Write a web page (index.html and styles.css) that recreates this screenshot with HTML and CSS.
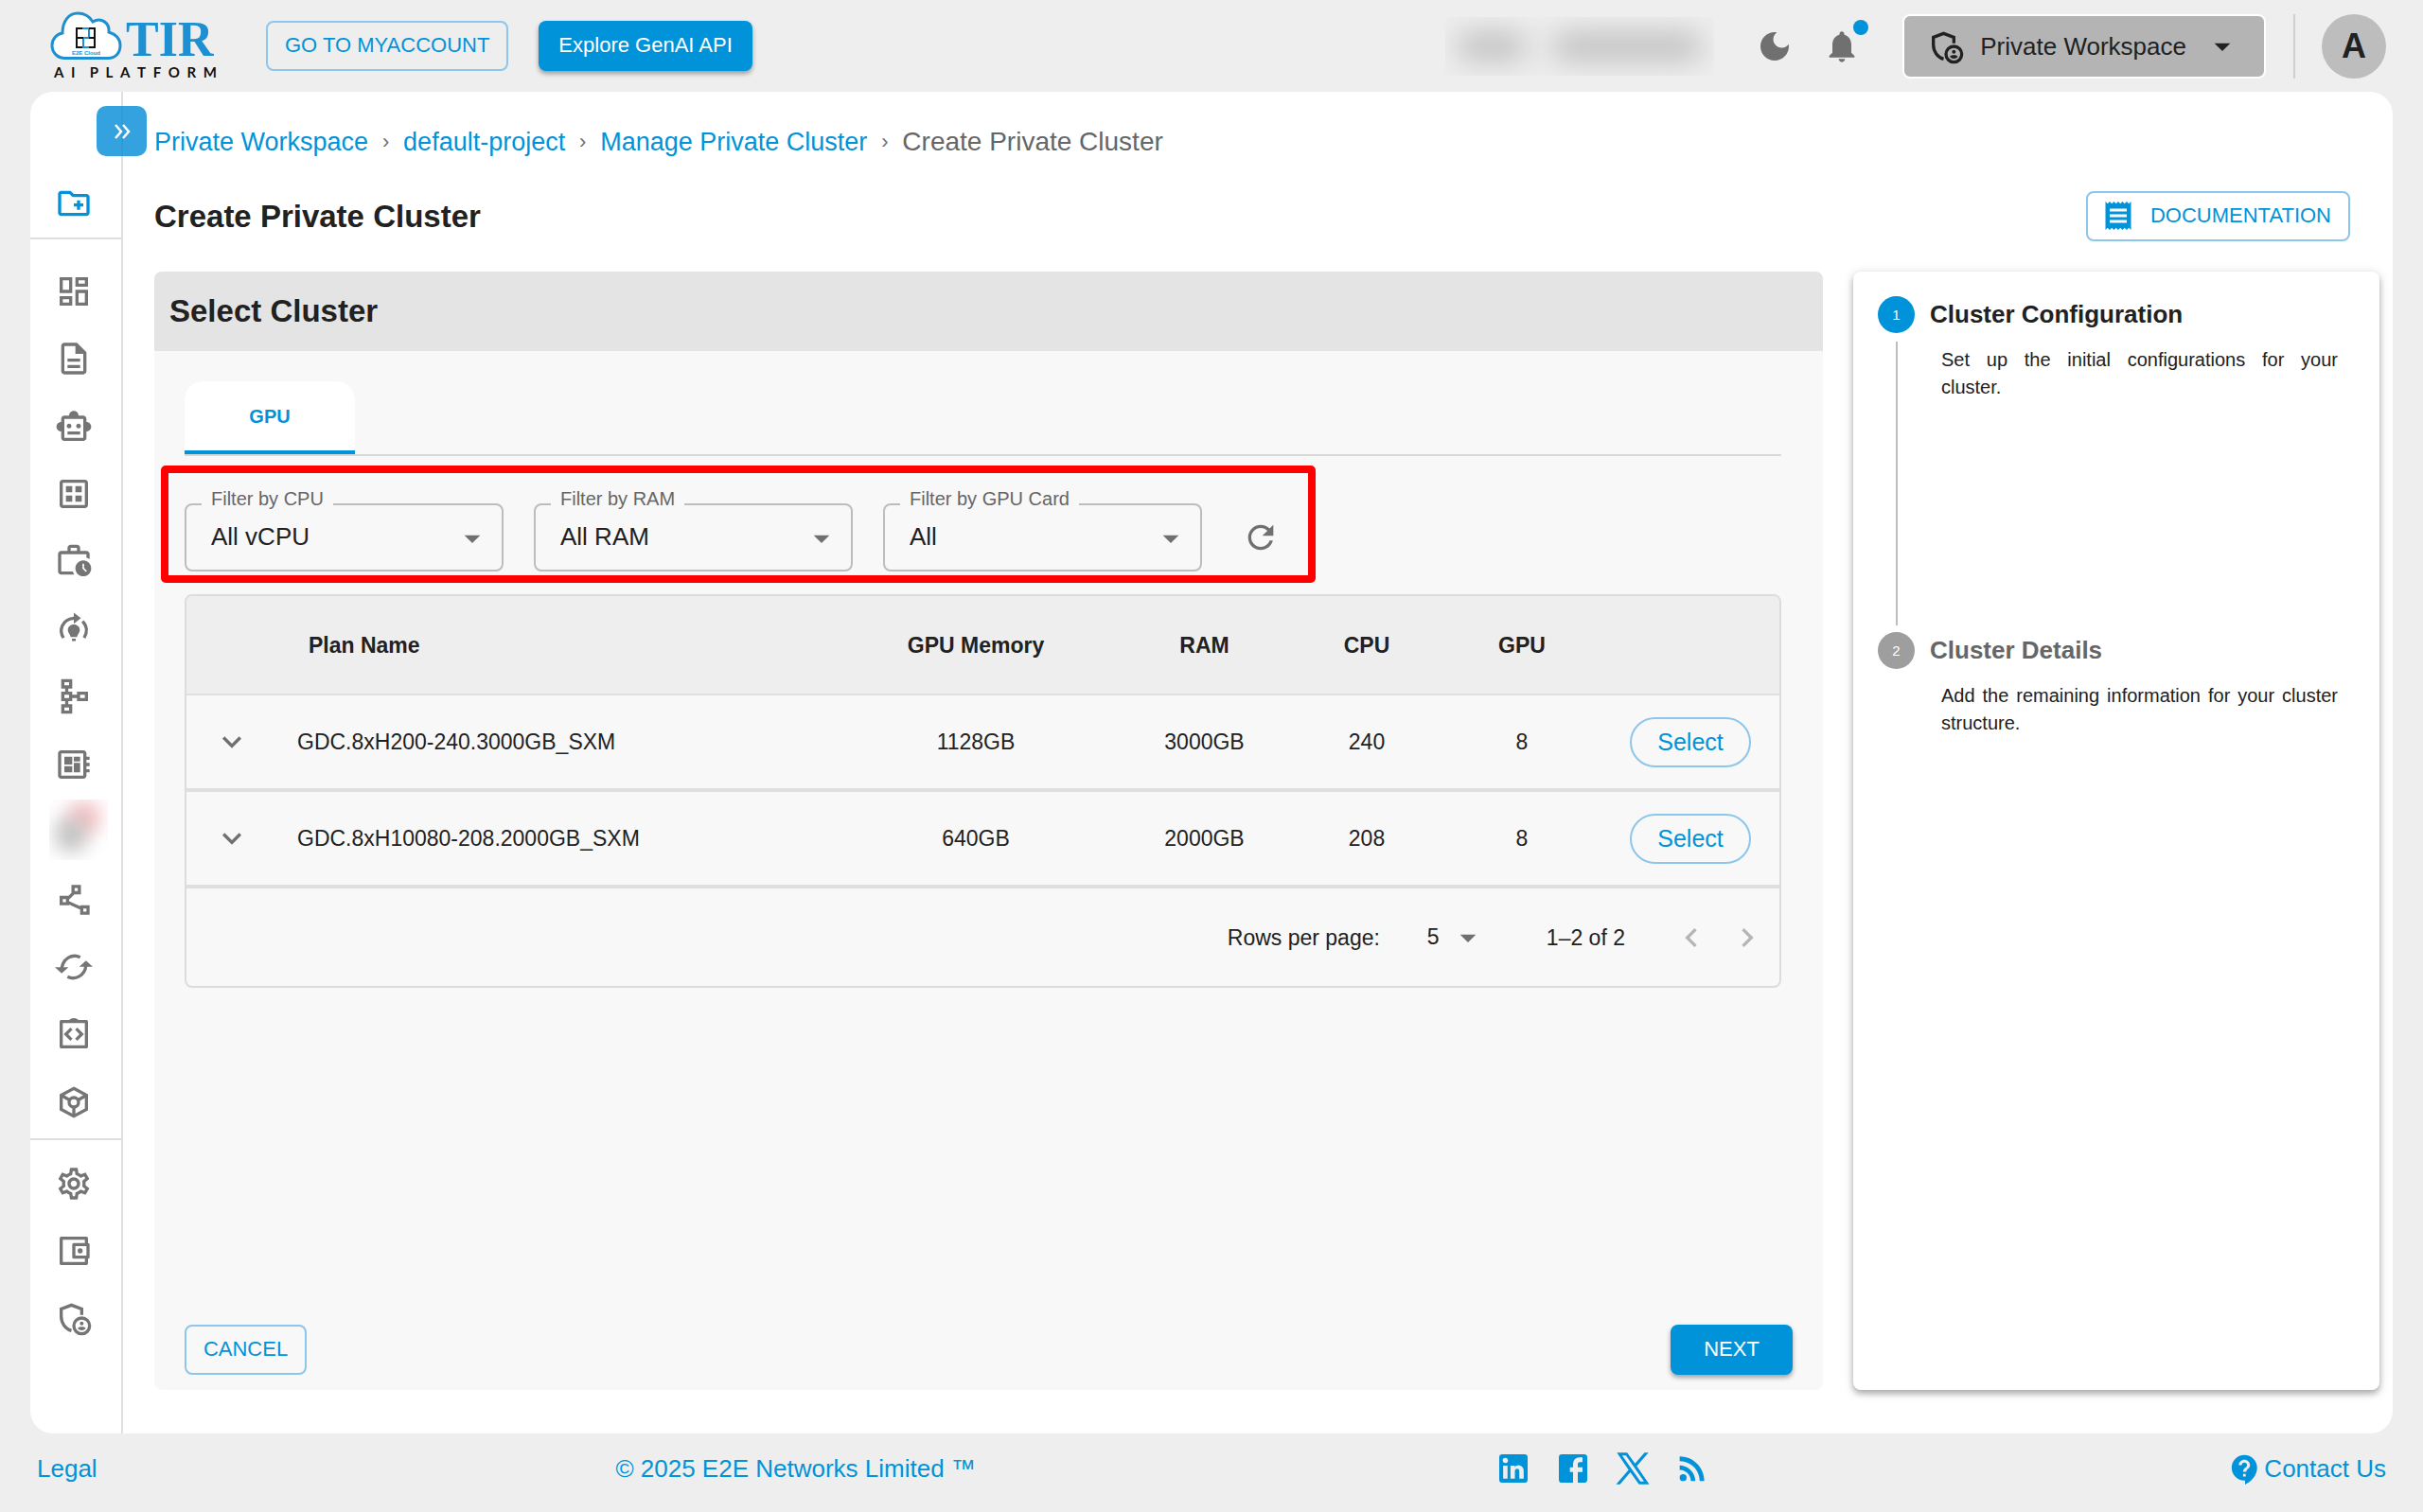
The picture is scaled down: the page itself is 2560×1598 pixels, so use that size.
FILE: index.html
```html
<!DOCTYPE html>
<html lang="en">
<head>
<meta charset="utf-8">
<title>TIR AI Platform - Create Private Cluster</title>
<link rel="stylesheet" href="styles.css">
</head>
<body>
<svg class="sprite" aria-hidden="true">
  <symbol id="shield-account" viewBox="0 0 24 24">
    <path fill="none" stroke="currentColor" stroke-width="2" d="M17 10V6.300L10.500 3.800 4 6.300V11c0 4.300 2.800 8 6.500 9"/>
    <circle cx="17" cy="17" r="5" fill="none" stroke="currentColor" stroke-width="2"/>
    <circle cx="17" cy="15.400" r="1.200" fill="currentColor"/>
    <path fill="currentColor" d="M14.500 18.600c0-1.500 5-1.500 5 0-.6.800-1.500 1.200-2.500 1.200s-1.900-.4-2.500-1.200z"/>
  </symbol>
  <symbol id="arrow-down" viewBox="0 0 24 24"><path fill="currentColor" d="M7 10l5 5 5-5z"/></symbol>
  <symbol id="chevron-down" viewBox="0 0 24 24"><path fill="currentColor" d="M7.410 8.590 12 13.170l4.590-4.580L18 10l-6 6-6-6z"/></symbol>
</svg>

<header class="topbar">
  <a class="logo" href="#" aria-label="TIR AI Platform">
    <svg class="logo-cloud" viewBox="0 0 76 52" aria-hidden="true">
      <path fill="#fff" stroke="#1e8fd0" stroke-width="3" d="M16 49.500C7 49.500 2 43 2 36c0-7 5-12 11-13C13 10 20 2 29 2c8 0 13 4 16 9 9-5 18 1 17 11 7 2 12 7 12 14 0 8-5 13.500-13 13.500z"/>
      <path fill="none" stroke="#1e8fd0" stroke-width="2" d="M34 18h7v10h-6v10h6"/>
      <path fill="none" stroke="#111" stroke-width="2" d="M34 18h-6v20h6M28 28h7M41 18h6v20h-6M41 28h6"/>
      <text x="38" y="46" text-anchor="middle" class="logo-small">E2E Cloud</text>
    </svg>
    <span class="logo-name">TIR</span>
    <span class="logo-sub"><span>A</span><span>I</span><span></span><span>P</span><span>L</span><span>A</span><span>T</span><span>F</span><span>O</span><span>R</span><span>M</span></span>
  </a>
  <button class="btn btn-outline btn-account" type="button">GO TO MYACCOUNT</button>
  <button class="btn btn-solid" type="button">Explore GenAI API</button>
  <div class="topbar-right">
    <div class="usage-mask"><i class="mask-short"></i><i class="mask-long"></i></div>
    <button class="icon-btn" type="button" aria-label="Dark mode"><svg class="icon" viewBox="0 0 24 24"><path fill="currentColor" d="M12 3c-4.970 0-9 4.030-9 9s4.030 9 9 9 9-4.030 9-9c0-.46-.04-.92-.1-1.360-.98 1.370-2.580 2.260-4.400 2.260-2.980 0-5.400-2.420-5.400-5.400 0-1.810.89-3.420 2.260-4.400-.44-.06-.9-.1-1.360-.1z"/></svg></button>
    <button class="icon-btn bell" type="button" aria-label="Notifications"><svg class="icon" viewBox="0 0 24 24"><path fill="currentColor" d="M12 22c1.100 0 2-.9 2-2h-4c0 1.100.89 2 2 2zm6-6v-5c0-3.070-1.640-5.640-4.500-6.320V4c0-.83-.67-1.500-1.500-1.500s-1.500.67-1.500 1.500v.68C7.630 5.360 6 7.920 6 11v5l-2 2v1h16v-1l-2-2z"/></svg></button>
    <button class="workspace" type="button"><svg class="icon"><use href="#shield-account"/></svg><span>Private Workspace</span><svg class="icon"><use href="#arrow-down"/></svg></button>
    <span class="avatar-wrap"><button class="avatar" type="button">A</button></span>
  </div>
</header>

<div class="shell">
  <nav class="sidebar" aria-label="Main">
    <button class="collapse" type="button" aria-label="Expand menu"><svg viewBox="0 0 24 24"><path fill="none" stroke="currentColor" stroke-width="2.500" d="M5 5l6 7-6 7M13 5l6 7-6 7"/></svg></button>
    <div class="nav-new"><a href="#" aria-label="New project"><svg class="icon" viewBox="0 0 24 24"><path fill="currentColor" d="M20 6h-8l-2-2H4c-1.110 0-1.990.89-1.990 2L2 18c0 1.110.89 2 2 2h16c1.110 0 2-.89 2-2V8c0-1.110-.89-2-2-2zm0 12H4V6h5.170l2 2H20v10zm-8-4h2v2h2v-2h2v-2h-2v-2h-2v2h-2z"/></svg></a></div>
    <div class="nav-main">
      <a href="#" aria-label="Dashboard"><svg class="icon" viewBox="0 0 24 24"><path fill="currentColor" d="M19 5v2h-4V5h4M9 5v6H5V5h4m10 8v6h-4v-6h4M9 17v2H5v-2h4M21 3h-8v6h8V3zM11 3H3v10h8V3zm10 8h-8v10h8V11zm-10 4H3v6h8v-6z"/></svg></a>
      <a href="#" aria-label="Notebooks"><svg class="icon" viewBox="0 0 24 24"><path fill="currentColor" d="M8 16h8v2H8zm0-4h8v2H8zm6-10H6c-1.100 0-2 .9-2 2v16c0 1.100.89 2 1.990 2H18c1.100 0 2-.9 2-2V8l-6-6zm4 18H6V4h7v5h5v11z"/></svg></a>
      <a href="#" aria-label="Agents"><svg class="icon" viewBox="0 0 24 24"><path fill="currentColor" d="M20 9V7c0-1.100-.9-2-2-2h-3c0-1.660-1.340-3-3-3S9 3.340 9 5H6c-1.100 0-2 .9-2 2v2c-1.660 0-3 1.340-3 3s1.340 3 3 3v4c0 1.100.9 2 2 2h12c1.100 0 2-.9 2-2v-4c1.660 0 3-1.340 3-3s-1.340-3-3-3zm-2 10H6V7h12v12zm-9-6c-.83 0-1.500-.67-1.500-1.500S8.170 10 9 10s1.500.67 1.500 1.500S9.830 13 9 13zm7.500-1.500c0 .83-.67 1.500-1.500 1.500s-1.500-.67-1.500-1.500.67-1.500 1.500-1.500 1.500.67 1.500 1.500zM8 15h8v2H8v-2z"/></svg></a>
      <a href="#" aria-label="Datasets"><svg class="icon" viewBox="0 0 24 24"><path fill="currentColor" d="M19 3H5c-1.100 0-2 .9-2 2v14c0 1.100.9 2 2 2h14c1.100 0 2-.9 2-2V5c0-1.100-.9-2-2-2zm0 16H5V5h14v14zM7 7h4v4H7zm6 0h4v4h-4zm-6 6h4v4H7zm6 0h4v4h-4z"/></svg></a>
      <a href="#" aria-label="Jobs"><svg class="icon" viewBox="0 0 24 24"><path fill="currentColor" d="M18 11c-2.760 0-5 2.240-5 5s2.240 5 5 5 5-2.240 5-5-2.240-5-5-5zm1.650 7.350L17.500 16.200V13h1v2.790l1.850 1.850-.7.710zM4 18V7h16v2.300c.7.200 1.400.5 2 .9V7c0-1.100-.9-2-2-2h-4V3c0-1.100-.9-2-2-2h-4c-1.100 0-2 .9-2 2v2H4C2.900 5 2 5.900 2 7v11c0 1.100.9 2 2 2h8.300c-.4-.6-.7-1.300-.9-2H4zM10 3h4v2h-4V3z"/></svg></a>
      <a href="#" aria-label="Fine tuning"><svg class="icon" viewBox="0 0 24 24"><path fill="none" stroke="currentColor" stroke-width="2" d="M5.500 17.500C2.500 13 4 6 12 5h2M17.500 7c3 3 3.200 7 1 10.500"/><path fill="currentColor" d="M12 1.500 16.500 5 12 8.500zM12 9c2.200 0 3.800 1.600 3.800 3.500 0 1.700-1.300 2.500-1.800 4.500h-4c-.5-2-1.800-2.800-1.800-4.500C8.200 10.600 9.800 9 12 9zM10.800 18h2.400v1.500h-2.400z"/></svg></a>
      <a href="#" aria-label="Pipelines"><svg class="icon" viewBox="0 0 24 24"><path fill="currentColor" d="M14 9v2h-3V9H8.500V7H11V1H4v6h2.500v2H4v6h2.500v2H4v6h7v-6H8.500v-2H11v-2h3v2h7V9h-7zM6 3h3v2H6V3zm3 18H6v-2h3v2zm0-8H6v-2h3v2zm10 0h-3v-2h3v2z"/></svg></a>
      <a href="#" aria-label="Clusters"><svg class="icon" viewBox="0 0 24 24"><path fill="currentColor" d="M22 9V7h-2V5c0-1.100-.9-2-2-2H4c-1.100 0-2 .9-2 2v14c0 1.100.9 2 2 2h14c1.100 0 2-.9 2-2v-2h2v-2h-2v-2h2v-2h-2V9h2zm-4 10H4V5h14v14zM6 13h5v4H6zm6-6h4v3h-4zM6 7h5v5H6zm6 4h4v6h-4z"/></svg></a>
      <span class="nav-mask"><i class="mask-red"></i><i class="mask-gray"></i></span>
      <a href="#" aria-label="Endpoints"><svg class="icon" viewBox="0 0 24 24"><g fill="none" stroke="currentColor" stroke-width="2"><path d="M11.500 3.500h4v4h-4zM4 10.500h4v4H4zM17 16.500h4v4h-4zM12 7.500l-4 4M8 13.500l9 4"/></g></svg></a>
      <a href="#" aria-label="Sync"><svg class="icon" viewBox="0 0 24 24"><path fill="none" stroke="currentColor" stroke-width="2" d="M16 5.800C11 3.500 5 6.500 4.300 13M8 18.200c5 2.300 11-.7 11.700-7.200"/><path fill="currentColor" d="M0 12.200h8.600L4.300 16zM24 11.800h-8.600L19.700 8z"/></svg></a>
      <a href="#" aria-label="Source"><svg class="icon" viewBox="0 0 24 24"><path fill="none" stroke="currentColor" stroke-width="2" stroke-linejoin="round" d="M4 4h16v16H4z"/><path fill="none" stroke="currentColor" stroke-width="2" d="M10.500 8.500 7 12l3.500 3.500M13.500 8.500 17 12l-3.500 3.500"/><path fill="currentColor" d="M9 3.500C9.500 1.300 14.500 1.300 15 3.500z"/></svg></a>
      <a href="#" aria-label="Models"><svg class="icon" viewBox="0 0 24 24"><g fill="none" stroke="currentColor" stroke-width="2"><path d="M12 3.200 20 7.500v9L12 20.800 4 16.500v-9zM4 7.500l5.200 3M20 7.500l-5.200 3M12 15v5.800"/><circle cx="12" cy="12" r="3"/></g></svg></a>
    </div>
    <div class="nav-foot">
      <a href="#" aria-label="Settings"><svg class="icon" viewBox="0 0 24 24"><path fill="currentColor" d="M19.430 12.980c.04-.32.070-.64.070-.98s-.03-.66-.07-.98l2.110-1.650c.19-.15.24-.42.12-.64l-2-3.460c-.09-.16-.26-.25-.44-.25-.06 0-.12.010-.17.030l-2.490 1c-.52-.4-1.080-.73-1.690-.98l-.38-2.650C14.460 2.180 14.250 2 14 2h-4c-.25 0-.46.18-.49.42l-.38 2.650c-.61.25-1.170.59-1.690.98l-2.490-1c-.06-.02-.12-.03-.18-.03-.17 0-.34.090-.43.250l-2 3.460c-.13.220-.07.490.120.640l2.110 1.650c-.04.320-.07.650-.07.980s.03.660.070.980l-2.110 1.650c-.19.150-.24.420-.12.640l2 3.460c.09.160.26.250.44.250.06 0 .12-.01.170-.03l2.490-1c.52.400 1.080.730 1.690.980l.38 2.650c.03.240.24.420.49.420h4c.25 0 .46-.18.490-.42l.38-2.650c.61-.25 1.170-.59 1.690-.98l2.490 1c.06.020.12.030.18.030.17 0 .34-.09.430-.25l2-3.460c.12-.22.070-.49-.12-.64l-2.110-1.650zm-1.980-1.710c.04.310.05.520.05.730s-.02.430-.05.730l-.14 1.130.89.700 1.080.84-.7 1.210-1.270-.51-1.040-.42-.9.680c-.43.320-.84.560-1.250.73l-1.060.43-.16 1.130-.2 1.350h-1.400l-.35-2.480-1.060-.43c-.43-.18-.83-.41-1.230-.71l-.91-.7-1.060.43-1.270.51-.7-1.210 1.080-.84.890-.7-.14-1.130c-.03-.31-.05-.54-.05-.74s.02-.43.050-.73l.14-1.130-.89-.7-1.080-.84.700-1.210 1.270.51 1.040.42.900-.68c.43-.32.840-.56 1.250-.73l1.060-.43.160-1.130.2-1.350h1.390l.35 2.480 1.060.43c.43.180.83.410 1.230.71l.91.700 1.060-.43 1.270-.51.700 1.210-1.070.85-.89.700.14 1.130zM12 8c-2.210 0-4 1.790-4 4s1.790 4 4 4 4-1.790 4-4-1.790-4-4-4zm0 6c-1.100 0-2-.9-2-2s.9-2 2-2 2 .9 2 2-.9 2-2 2z"/></svg></a>
      <a href="#" aria-label="Billing"><svg class="icon" viewBox="0 0 24 24"><path fill="none" stroke="currentColor" stroke-width="2" stroke-linejoin="round" d="M20 8V4H4v16h16v-4M12 8h9v8h-9z"/><circle cx="16" cy="12" r="1.600" fill="currentColor"/></svg></a>
      <a href="#" aria-label="Access"><svg class="icon"><use href="#shield-account"/></svg></a>
    </div>
  </nav>

  <main class="content">
    <nav class="crumbs" aria-label="Breadcrumb">
      <a href="#">Private Workspace</a><span class="sep">›</span><a href="#">default-project</a><span class="sep">›</span><a href="#">Manage Private Cluster</a><span class="sep">›</span><span class="current">Create Private Cluster</span>
    </nav>
    <div class="title-row">
      <h1>Create Private Cluster</h1>
      <button class="btn btn-outline btn-docs" type="button"><svg viewBox="0 0 24 24"><path fill="currentColor" d="M18 17H6v-2h12v2zm0-4H6v-2h12v2zm0-4H6V7h12v2zM3 22l1.500-1.500L6 22l1.500-1.500L9 22l1.500-1.500L12 22l1.500-1.500L15 22l1.500-1.500L18 22l1.500-1.500L21 22V2l-1.500 1.500L18 2l-1.500 1.500L15 2l-1.500 1.500L12 2l-1.500 1.500L9 2 7.500 3.500 6 2 4.500 3.500 3 2v20z"/></svg>DOCUMENTATION</button>
    </div>
    <div class="columns">
      <section class="panel">
        <h2>Select Cluster</h2>
        <div class="panel-body">
          <div class="tabs" role="tablist"><button class="tab" type="button" role="tab" aria-selected="true">GPU</button></div>
          <div class="filters">
            <div class="field"><label for="f-cpu">Filter by CPU</label><select id="f-cpu"><option>All vCPU</option></select><svg class="icon"><use href="#arrow-down"/></svg></div>
            <div class="field"><label for="f-ram">Filter by RAM</label><select id="f-ram"><option>All RAM</option></select><svg class="icon"><use href="#arrow-down"/></svg></div>
            <div class="field"><label for="f-gpu">Filter by GPU Card</label><select id="f-gpu"><option>All</option></select><svg class="icon"><use href="#arrow-down"/></svg></div>
            <button class="icon-btn refresh" type="button" aria-label="Reset filters"><svg class="icon" viewBox="0 0 24 24"><path fill="currentColor" d="M17.650 6.350C16.200 4.900 14.210 4 12 4c-4.420 0-7.990 3.580-7.990 8s3.570 8 7.990 8c3.730 0 6.840-2.550 7.730-6h-2.080c-.82 2.330-3.040 4-5.650 4-3.310 0-6-2.690-6-6s2.690-6 6-6c1.660 0 3.140.69 4.220 1.780L13 11h7V4l-2.350 2.350z"/></svg></button>
            <span class="highlight"></span>
          </div>
          <div class="table-box">
            <table>
              <colgroup><col class="c-toggle"><col><col class="c-mem"><col class="c-ram"><col class="c-cpu"><col class="c-gpu"><col class="c-act"></colgroup>
              <thead><tr><th></th><th class="name">Plan Name</th><th>GPU Memory</th><th>RAM</th><th>CPU</th><th>GPU</th><th></th></tr></thead>
              <tbody>
                <tr><td><button class="icon-btn" type="button" aria-label="Expand plan"><svg class="icon"><use href="#chevron-down"/></svg></button></td><td class="name">GDC.8xH200-240.3000GB_SXM</td><td>1128GB</td><td>3000GB</td><td>240</td><td>8</td><td class="act"><button class="btn btn-outline btn-pill" type="button">Select</button></td></tr>
                <tr><td><button class="icon-btn" type="button" aria-label="Expand plan"><svg class="icon"><use href="#chevron-down"/></svg></button></td><td class="name">GDC.8xH10080-208.2000GB_SXM</td><td>640GB</td><td>2000GB</td><td>208</td><td>8</td><td class="act"><button class="btn btn-outline btn-pill" type="button">Select</button></td></tr>
              </tbody>
            </table>
            <div class="pager">
              <label for="rows">Rows per page:</label>
              <span class="rows"><select id="rows"><option>5</option></select><svg class="icon"><use href="#arrow-down"/></svg></span>
              <span class="range">1–2 of 2</span>
              <button class="icon-btn" type="button" disabled aria-label="Previous page"><svg class="icon" viewBox="0 0 24 24"><path fill="currentColor" d="M15.410 7.410 14 6l-6 6 6 6 1.410-1.410L10.830 12z"/></svg></button>
              <button class="icon-btn" type="button" disabled aria-label="Next page"><svg class="icon" viewBox="0 0 24 24"><path fill="currentColor" d="M10 6 8.590 7.410 13.170 12l-4.580 4.590L10 18l6-6z"/></svg></button>
            </div>
          </div>
          <div class="actions">
            <button class="btn btn-outline btn-wide" type="button">CANCEL</button>
            <button class="btn btn-solid btn-wide" type="button">NEXT</button>
          </div>
        </div>
      </section>
      <aside class="steps">
        <ol>
          <li class="step active"><div class="rail"><span class="dot">1</span><span class="line"></span></div><div class="step-text"><h3>Cluster Configuration</h3><p><span class="full-line">Set up the initial configurations for your</span> cluster.</p></div></li>
          <li class="step"><div class="rail"><span class="dot">2</span></div><div class="step-text"><h3>Cluster Details</h3><p><span class="full-line">Add the remaining information for your cluster</span> structure.</p></div></li>
        </ol>
      </aside>
    </div>
  </main>
</div>

<footer class="footer">
  <a href="#">Legal</a>
  <a href="#">© 2025 E2E Networks Limited ™</a>
  <div class="social">
    <a href="#" aria-label="LinkedIn"><svg class="icon" viewBox="0 0 24 24"><path fill="currentColor" d="M19 3a2 2 0 0 1 2 2v14a2 2 0 0 1-2 2H5a2 2 0 0 1-2-2V5a2 2 0 0 1 2-2h14m-.5 15.500v-5.300a3.260 3.260 0 0 0-3.260-3.260c-.85 0-1.840.52-2.320 1.300v-1.110h-2.790v8.370h2.790v-4.930c0-.77.62-1.400 1.390-1.400a1.400 1.400 0 0 1 1.400 1.400v4.930h2.790M6.880 8.560a1.680 1.680 0 0 0 1.680-1.680c0-.93-.75-1.690-1.680-1.690a1.690 1.690 0 0 0-1.690 1.690c0 .93.760 1.680 1.690 1.680m1.390 9.940v-8.370H5.500v8.370h2.770z"/></svg></a>
    <a href="#" aria-label="Facebook"><svg class="icon" viewBox="0 0 24 24"><path fill="currentColor" d="M19 3H5a2 2 0 0 0-2 2v14a2 2 0 0 0 2 2h7v-6.800h-2v-3h2V9.500C12 6.800 13.500 5 16.200 5H18v3h-1.600c-.9 0-1.400.5-1.400 1.400v1.800h3v3h-3V21h4a2 2 0 0 0 2-2V5a2 2 0 0 0-2-2z"/></svg></a>
    <a href="#" aria-label="X"><svg class="icon" viewBox="0 0 24 24"><path fill="currentColor" d="M2 2h6.500l5 6.900L19.500 2H22l-7.400 8.500L22.500 22H16l-5.500-7.600L4 22H1.500l7.900-9.100zm3.300 1.700 11.600 16.600h2.300L7.700 3.700z"/></svg></a>
    <a href="#" aria-label="RSS"><svg class="icon" viewBox="0 0 24 24"><circle cx="6.200" cy="17.800" r="2.200" fill="currentColor"/><path fill="currentColor" d="M4 4.400v2.900c7 0 12.700 5.700 12.700 12.700h2.900C19.600 11.400 12.600 4.400 4 4.400zm0 5.700v2.800c3.900 0 7.100 3.200 7.100 7.100h2.800c0-5.500-4.400-9.900-9.900-9.900z"/></svg></a>
  </div>
  <a class="contact" href="#"><svg viewBox="0 0 24 24"><path fill="currentColor" d="M11.500 2C6.260 2 2 6.260 2 11.500S6.260 21 11.500 21h.5v3c4.860-2.340 9-7 9-12.500C21 6.260 16.740 2 11.500 2zm1 16h-2v-2h2v2zm.4-3.500h-2.400c0-3.250 3-3 3-5 0-1.100-.9-2-2-2s-2 .9-2 2h-2.200c0-2.210 1.990-4 4.200-4s4.200 1.790 4.200 4c0 2.500-2.800 2.750-2.800 5z"/></svg>Contact Us</a>
</footer>
</body>
</html>
```

FILE: styles.css
```css
:root {
  --blue: #0093d9;
  --blue-line: #8cc6ea;
  --text: #212121;
  --muted: #707070;
  --line: #dcdcdc;
  --page: #eeeeee;
  --soft: #f8f8f8;
}

* { box-sizing: border-box; }

body {
  margin: 0;
  min-height: 100vh;
  display: flex;
  flex-direction: column;
  background: var(--page);
  color: var(--text);
  font: 26px/32px "Liberation Sans", Arial, Helvetica, sans-serif;
}

a { color: var(--blue); text-decoration: none; }
h1, h2, h3, p, ol { margin: 0; padding: 0; }
button, select { font: inherit; color: inherit; }
button { border: 0; background: none; padding: 0; cursor: pointer; }
svg { display: block; flex: none; }
.sprite { display: none; }
.icon { width: 40px; height: 40px; }
.icon-btn { color: var(--muted); }

/* Buttons */
.btn {
  display: inline-flex;
  align-items: center;
  justify-content: center;
  height: 53px;
  padding: 0 21px 1px;
  border-radius: 8px;
  font-size: 22px;
  white-space: nowrap;
}
.btn-outline { border: 2px solid var(--blue-line); color: var(--blue); }
.btn-solid { background: var(--blue); color: #fff; box-shadow: 0 3px 5px rgba(0, 0, 0, .35); }
.btn-account { padding: 0 18px 1px; }
.btn-pill { width: 128px; border-radius: 27px; font-size: 25px; }
.btn-wide { min-width: 129px; padding: 0 16px 1px; }
.btn-docs { gap: 16px; padding: 0 18px 1px 14px; }
.btn-docs svg { width: 36px; height: 36px; }

/* Top bar */
.topbar {
  display: flex;
  align-items: center;
  height: 97px;
  padding: 0 39px 0 53px;
  gap: 32px;
}
.logo {
  display: grid;
  grid-template-columns: 76px auto;
  row-gap: 3px;
  width: 176px;
  margin-right: 20px;
}
.logo-cloud { width: 76px; height: 52px; }
.logo-small { font: bold 6px "Liberation Sans", sans-serif; fill: #1e8fd0; }
.logo-name { align-self: end; padding-left: 4px; font: bold 52px/44px "Liberation Serif", serif; color: #1e8fd0; }
.logo-sub {
  grid-column: 1 / -1;
  display: flex;
  justify-content: space-between;
  padding: 0 0 0 4px;
  font: bold 15px/18px Lato, sans-serif;
  color: #111;
}
.topbar-right { display: flex; align-items: center; margin-left: auto; }
.usage-mask {
  display: flex;
  align-items: center;
  gap: 26px;
  width: 284px;
  height: 62px;
  padding: 0 12px;
  margin-right: 44px;
  overflow: hidden;
}
.usage-mask i { height: 30px; border-radius: 15px; background: #c0c0c0; filter: blur(15px); }
.mask-short { width: 74px; }
.mask-long { flex: 1; }
.bell { position: relative; margin: 0 44px 0 31px; }
.bell::after {
  content: "";
  position: absolute;
  top: -8px;
  right: -8px;
  width: 16px;
  height: 16px;
  border-radius: 50%;
  background: var(--blue);
}
.workspace {
  display: flex;
  align-items: center;
  height: 68px;
  padding: 0 24px;
  border: 2px solid #fff;
  border-radius: 8px;
  background: #b4b4b4;
}
.workspace span { margin: 0 18px 0 16px; }
.avatar-wrap { margin-left: 29px; padding-left: 28px; border-left: 2px solid #cfcfcf; }
.avatar {
  display: block;
  width: 68px;
  height: 68px;
  border-radius: 50%;
  background: #bdbdbd;
  font-size: 36px;
  font-weight: bold;
}

/* Main sheet */
.shell {
  flex: 1;
  display: flex;
  margin: 0 32px;
  border-radius: 24px;
  background: #fff;
}
.sidebar {
  position: relative;
  display: flex;
  flex-direction: column;
  width: 98px;
  border-right: 2px solid #dfdfdf;
}
.sidebar a { display: flex; justify-content: center; color: #757575; }
.collapse {
  position: absolute;
  top: 15px;
  right: -27px;
  display: grid;
  place-items: center;
  width: 53px;
  height: 53px;
  border-radius: 10px;
  background: rgba(0, 139, 214, .8);
  color: #fff;
}
.collapse svg { width: 24px; height: 24px; }
.nav-new { padding: 98px 5px 16px 0; border-bottom: 2px solid #dfdfdf; }
.sidebar .nav-new a { color: var(--blue); }
.nav-main {
  flex: 0 1 952px;
  display: flex;
  flex-direction: column;
  justify-content: space-between;
  padding: 35px 5px 18px 0;
  border-bottom: 2px solid #dfdfdf;
}
.nav-mask {
  display: grid;
  width: 62px;
  height: 64px;
  margin: -14px 0 -10px 20px;
  overflow: hidden;
}
.nav-mask i { grid-area: 1 / 1; border-radius: 50%; filter: blur(10px); }
.mask-red { place-self: start end; width: 34px; height: 34px; margin: 2px 8px; background: #f2b9bc; }
.mask-gray { place-self: end start; width: 34px; height: 38px; margin: 8px 6px; background: #c0c0c0; }
.nav-foot { display: flex; flex-direction: column; gap: 31px; padding: 26px 5px 40px 0; }

.content { flex: 1; min-width: 0; padding: 37px 14px 46px 33px; display: flex; flex-direction: column; }
.crumbs { display: flex; height: 32px; font-size: 27px; }
.crumbs .sep { width: 37px; text-align: center; font-size: 22px; color: var(--muted); }
.crumbs .current { color: #666; font-size: 28px; }
.title-row {
  display: flex;
  align-items: center;
  justify-content: space-between;
  margin: 36px 31px 32px 0;
}
h1, h2 { font-size: 33px; line-height: 40px; }
.columns { flex: 1; display: flex; gap: 32px; }

/* Cluster panel */
.panel {
  flex: 1;
  min-width: 0;
  display: flex;
  flex-direction: column;
  border-radius: 8px;
  background: var(--soft);
  overflow: hidden;
}
.panel h2 { padding: 22px 16px; background: #e4e4e4; }
.panel-body { flex: 1; display: flex; flex-direction: column; padding: 32px 32px 16px; }
.tabs { display: flex; margin-right: 12px; border-bottom: 2px solid #d8d8d8; }
.tab {
  width: 180px;
  height: 77px;
  border-bottom: 4px solid var(--blue);
  border-radius: 20px 20px 0 0;
  background: #fff;
  color: var(--blue);
  font-size: 20px;
  font-weight: bold;
}
.filters { position: relative; display: flex; align-items: center; gap: 32px; margin-top: 50px; }
.field { position: relative; width: 337px; }
.field label {
  position: absolute;
  top: -17px;
  left: 18px;
  padding: 0 10px;
  background: var(--soft);
  color: #666;
  font-size: 20px;
  line-height: 24px;
}
.field select {
  appearance: none;
  width: 100%;
  height: 72px;
  padding: 0 26px 2px;
  border: 2px solid #bdbdbd;
  border-radius: 8px;
  background: transparent;
}
.field .icon { position: absolute; top: 17px; right: 13px; color: var(--muted); pointer-events: none; }
.refresh { margin-left: 10px; }
.highlight {
  position: absolute;
  top: -40px;
  left: -25px;
  width: 1220px;
  height: 124px;
  border: 8px solid #f00;
  border-radius: 5px;
  pointer-events: none;
}

.table-box {
  margin: 24px 12px 0 0;
  border: 2px solid var(--line);
  border-radius: 8px;
  overflow: hidden;
  font-size: 23px;
}
table { width: 100%; table-layout: fixed; border-collapse: separate; border-spacing: 0; }
th, td { padding: 0; text-align: center; }
th { height: 105px; border-bottom: 2px solid #dfdfdf; background: var(--page); }
td { height: 102px; border-bottom: 4px solid #dfdfdf; }
td .icon-btn { display: block; margin: 0 auto; }
th.name { padding-left: 33px; text-align: left; }
td.name { padding-left: 21px; text-align: left; }
td.act { padding-right: 30px; text-align: right; }
.act .btn { vertical-align: middle; }
.c-toggle { width: 96px; }
.c-mem { width: 322px; }
.c-ram { width: 161px; }
.c-cpu { width: 182px; }
.c-gpu { width: 146px; }
.c-act { width: 199px; }
.pager { display: flex; align-items: center; justify-content: flex-end; height: 103px; padding-right: 14px; }
.rows { position: relative; width: 80px; margin: 0 46px 0 50px; }
.rows select { appearance: none; width: 100%; height: 40px; padding: 0 0 2px; border: 0; background: transparent; }
.rows .icon { position: absolute; top: 0; right: 17px; color: var(--muted); pointer-events: none; }
.range { margin-right: 50px; }
.pager .icon-btn { color: #b5b5b5; }
.pager .icon-btn + .icon-btn { margin-left: 19px; }
.actions { display: flex; justify-content: space-between; margin-top: auto; }

/* Stepper */
.steps {
  width: 556px;
  padding: 26px 44px 25px 26px;
  border-radius: 8px;
  background: #fff;
  box-shadow: 0 4px 6px rgba(0, 0, 0, .25), 0 2px 12px rgba(0, 0, 0, .15);
}
.steps ol { list-style: none; }
.step { display: flex; gap: 16px; color: #666; }
.step.active { min-height: 355px; color: var(--text); }
.step-text { flex: 1; }
.rail { display: flex; flex-direction: column; align-items: center; width: 39px; }
.dot {
  display: grid;
  place-items: center;
  width: 39px;
  height: 39px;
  border-radius: 50%;
  background: #9e9e9e;
  color: #fff;
  font-size: 15px;
}
.active .dot { background: var(--blue); }
.line { flex: 1; width: 2px; margin: 9px 0 7px; background: #bdbdbd; }
h3 { font-size: 26px; line-height: 39px; }
.step p { padding: 14px 0 0 12px; color: var(--text); font-size: 20px; line-height: 29px; }
.full-line { display: block; text-align-last: justify; }

/* Footer */
.footer { display: flex; align-items: center; justify-content: space-between; height: 83px; padding: 0 39px 10px; }
.social { display: flex; gap: 23px; }
.contact { display: flex; align-items: center; gap: 3px; }
.contact svg { width: 34px; height: 34px; }
```
